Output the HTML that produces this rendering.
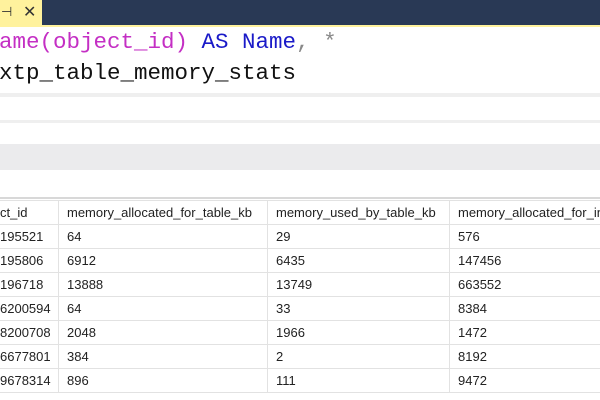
<!DOCTYPE html>
<html><head><style>
body{margin:0;width:600px;height:400px;overflow:hidden;background:#fff;position:relative;font-family:"Liberation Sans",Arial,sans-serif}
.abs{position:absolute}
.code{font-family:"Liberation Mono",monospace;font-size:22.5px;white-space:pre;left:-1px}
table{border-collapse:collapse;font-size:13px;color:#222;table-layout:fixed;width:620px}
td{height:23px;border:1px solid #e2e2e2;padding:0 0 0 8px;white-space:nowrap;overflow:hidden}
</style></head><body>
<div class="abs" style="left:0;top:0;width:600px;height:25px;background:#293955"></div>
<div class="abs" style="left:0;top:0;width:42px;height:25px;background:#fff29d"></div>
<div class="abs" style="left:1px;top:4px;font-size:13px;color:#333">⊣</div>
<div class="abs" style="left:23px;top:2px;font-size:16px;color:#333">✕</div>
<div class="abs" style="left:0;top:25px;width:600px;height:2px;background:#fff29d"></div>
<div class="abs code" style="top:29px"><span style="color:#c42fc4">ame(object_id)</span> <span style="color:#1a1ac8">AS Name</span><span style="color:#888">,</span> <span style="color:#888">*</span></div>
<div class="abs code" style="top:60px;color:#111">xtp_table_memory_stats</div>
<div class="abs" style="left:0;top:93px;width:600px;height:4px;background:#efefef"></div>
<div class="abs" style="left:0;top:120px;width:600px;height:3px;background:#efefef"></div>
<div class="abs" style="left:0;top:144px;width:600px;height:26px;background:#ebebed"></div>
<div class="abs" style="left:0;top:197px;width:600px;height:2px;background:#d8d8d8"></div>
<table class="abs" style="left:-1px;top:200px">
<colgroup><col style="width:59px"><col style="width:209px"><col style="width:182px"><col style="width:170px"></colgroup>
<tr><td style="padding-left:0">ct_id</td><td>memory_allocated_for_table_kb</td><td>memory_used_by_table_kb</td><td>memory_allocated_for_in</td></tr>
<tr><td style="padding-left:0">195521</td><td>64</td><td>29</td><td>576</td></tr>
<tr><td style="padding-left:0">195806</td><td>6912</td><td>6435</td><td>147456</td></tr>
<tr><td style="padding-left:0">196718</td><td>13888</td><td>13749</td><td>663552</td></tr>
<tr><td style="padding-left:0">6200594</td><td>64</td><td>33</td><td>8384</td></tr>
<tr><td style="padding-left:0">8200708</td><td>2048</td><td>1966</td><td>1472</td></tr>
<tr><td style="padding-left:0">6677801</td><td>384</td><td>2</td><td>8192</td></tr>
<tr><td style="padding-left:0">9678314</td><td>896</td><td>111</td><td>9472</td></tr>
</table>
</body></html>
